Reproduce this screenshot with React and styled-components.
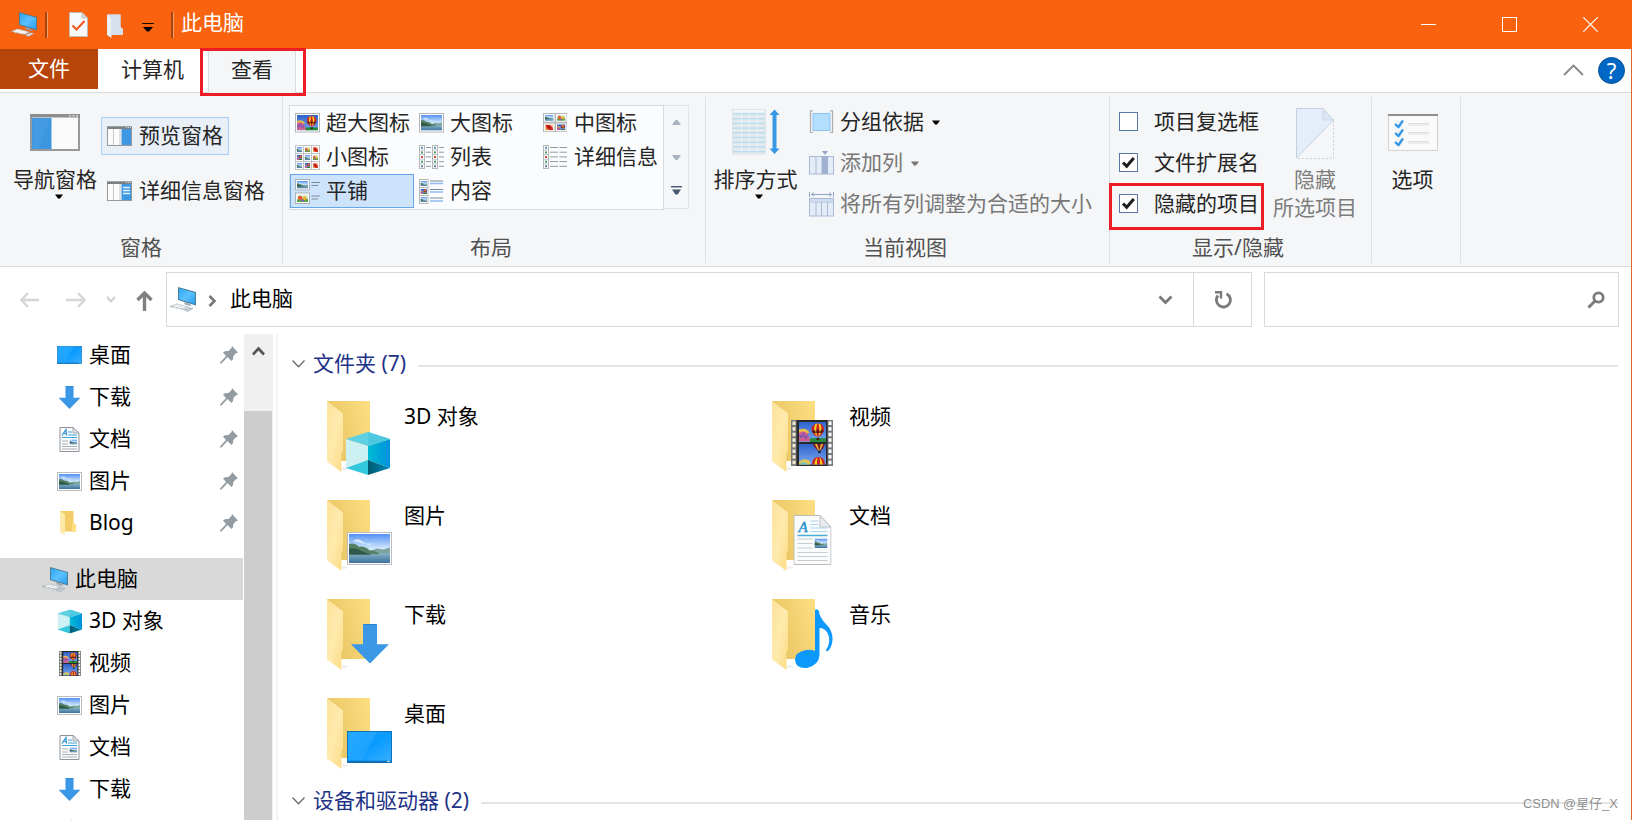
import React from 'react';
import styled, { createGlobalStyle, css } from 'styled-components';

const Global = createGlobalStyle`
  * { box-sizing: border-box; }
  body { margin: 0; background: #fff; overflow: hidden; }
  svg { display: block; flex: none; }
`;

/* ---------- window frame ---------- */

const Window = styled.div`
  width: 1632px;
  height: 820px;
  overflow: hidden;
  position: relative;
  display: flex;
  flex-direction: column;
  background: #fff;
  color: #000;
  font: 21px/28px 'Noto Sans', 'Noto Sans CJK SC', sans-serif;
  white-space: nowrap;
`;

const TitleBar = styled.header`
  height: 49px;
  flex: none;
  display: flex;
  align-items: center;
  background: #f9630f;
  color: #fff;
  padding-left: 11px;
`;

const TitleSeparator = styled.i`
  width: 3px;
  height: 26px;
  margin-left: ${p => p.$gap}px;
  background: #a2470f;
  border-right: 1px solid #fb9a62;
`;

const IconSlot = styled.span`
  margin-left: ${p => p.$gap || 0}px;
  margin-top: ${p => p.$drop || 0}px;
`;

const Title = styled.h1`
  margin: -5px 0 0 7px;
  font: inherit;
`;

const WindowButtons = styled.div`
  margin-left: auto;
  display: flex;
  margin: 0 1px 1px auto;
`;

const WindowButton = styled.span`
  width: 81px;
  height: 48px;
  display: flex;
  align-items: center;
  justify-content: center;
`;

const Body = styled.div`
  flex: 1;
  min-height: 0;
  display: flex;
  flex-direction: column;
  border-right: 1px solid #dd6a2c;
`;

/* ---------- tabs ---------- */

const TabBar = styled.nav`
  height: 44px;
  flex: none;
  display: flex;
  border-bottom: 1px solid #dadbdc;
`;

const Tab = styled.span`
  position: relative;
  height: 43px;
  line-height: 41px;
  text-align: center;
  color: #262626;
  width: ${p => p.$width}px;
  ${p => p.$kind === 'file' && css`
    height: 40px;
    line-height: 39px;
    background: #b74409;
    color: #fff;
  `}
  ${p => p.$kind === 'active' && css`
    height: 44px;
    margin-left: 1px;
    background: #f5f6f7;
    border: solid #dadbdc;
    border-width: 0 1px;
  `}
`;

const Highlight = styled.i`
  position: absolute;
  border: 3px solid #ee1c25;
  z-index: 2;
  pointer-events: none;
  ${p => p.$where};
`;

const TabTools = styled.div`
  margin-left: auto;
  display: flex;
  align-items: center;
  gap: 14px;
  padding: 0 6px 1px 0;
`;

const Help = styled.span`
  width: 27px;
  height: 27px;
  border-radius: 50%;
  background: #0067c4;
  border: 1px solid #064f92;
  color: #fff;
  text-align: center;
  font: 22px/24px 'Noto Sans', sans-serif;
`;

/* ---------- ribbon ---------- */

const Ribbon = styled.section`
  height: 174px;
  flex: none;
  display: flex;
  padding-top: 4px;
  background: #f5f6f7;
  border-bottom: 1px solid #d9dadc;
  color: #262626;
`;

const Group = styled.div`
  position: relative;
  width: ${p => p.$width}px;
  height: 166px;
  border-right: 1px solid #e0e1e3;
  display: flex;
  flex-direction: column;
`;

const GroupBody = styled.div`
  height: 136px;
  display: flex;
  align-items: flex-start;
  padding: ${p => p.$pad};
`;

const GroupLabel = styled.div`
  text-align: center;
  color: #515151;
  padding-right: ${p => p.$shift || 0}px;
`;

const BigButton = styled.div`
  width: ${p => p.$width}px;
  display: flex;
  flex-direction: column;
  align-items: center;
  color: ${p => (p.$disabled ? '#7d7d7d' : '#262626')};
  & > svg:last-child { margin: 1px 0 0 7px; }
`;

const BigIcon = styled.span`
  height: 68px;
  padding-top: ${p => p.$top}px;
`;

const PaneStack = styled.div`
  margin: 20px 0 0 2px;
  display: flex;
  flex-direction: column;
  gap: 17px;
`;

const CommandStack = styled.div`
  margin: 11px 0 0 ${p => p.$left}px;
  display: flex;
  flex-direction: column;
  gap: 13px;
`;

const ItemText = styled.span`
  margin-bottom: 2px;
`;

const PaneButton = styled.div`
  height: 38px;
  width: ${p => p.$width}px;
  padding-left: 5px;
  display: flex;
  align-items: center;
  gap: 7px;
  border: 1px solid ${p => (p.$on ? '#a5cdf5' : 'transparent')};
  background: ${p => (p.$on ? '#e8eff7' : 'transparent')};
`;

const Gallery = styled.div`
  display: flex;
  width: 400px;
  height: 105px;
`;

const GalleryGrid = styled.div`
  width: 375px;
  border: 1px solid #dadbdc;
  background: #fbfcfd;
  display: grid;
  grid-template-columns: repeat(3, 124px);
  grid-auto-rows: 34px;
`;

const GalleryItem = styled.div`
  display: flex;
  align-items: center;
  gap: 6px;
  padding-left: 4px;
  border: 1px solid ${p => (p.$on ? '#66a7e8' : 'transparent')};
  background: ${p => (p.$on ? '#cde3fb' : 'transparent')};
`;

const GalleryScroll = styled.div`
  width: 25px;
  height: 104px;
  display: grid;
  grid-template-rows: 35px 34px 34px;
  border: solid #e3e4e6;
  border-width: 1px 1px 1px 0;
`;

const GalleryArrow = styled.span`
  display: flex;
  align-items: center;
  justify-content: center;
  padding-bottom: 2px;
  ${p => p.$last && 'border-left: 1px solid #dadbdc; margin-left: -1px; padding-bottom: 4px;'}
`;

const Command = styled.div`
  height: 28px;
  display: flex;
  align-items: center;
  color: ${p => (p.$disabled ? '#777' : '#262626')};
  & > ${ItemText} { margin: 0 8px 2px 6px; }
`;

const Check = styled.label`
  position: relative;
  height: 28px;
  display: flex;
  align-items: center;
  gap: 16px;
`;

const Box = styled.span`
  width: 19px;
  height: 19px;
  margin-bottom: 2px;
  background: #fff;
  border: 1px solid #5a76a8;
`;

/* ---------- address row ---------- */

const AddressRow = styled.div`
  height: 67px;
  flex: none;
  display: flex;
  padding: 5px 12px 7px 0;
`;

const History = styled.div`
  width: 166px;
  display: flex;
  align-items: center;
  padding-left: 20px;
`;

const AddressBox = styled.div`
  width: 1086px;
  border: 1px solid #d9d9d9;
  display: flex;
  align-items: center;
`;

const Crumb = styled.span`
  margin: -3px 0 0 14px;
  flex: 1;
`;

const Refresh = styled.span`
  width: 58px;
  height: 100%;
  margin-left: 20px;
  border-left: 1px solid #d9d9d9;
  display: flex;
  align-items: center;
  justify-content: center;
`;

const SearchBox = styled.div`
  margin-left: 12px;
  flex: 1;
  border: 1px solid #d9d9d9;
  display: flex;
  align-items: center;
  justify-content: flex-end;
  padding-right: 13px;
`;

/* ---------- explorer ---------- */

const Explorer = styled.div`
  flex: 1;
  min-height: 0;
  display: flex;
  overflow: hidden;
`;

const Sidebar = styled.aside`
  width: 244px;
  flex: none;
`;

const SideGap = styled.div`
  height: 14px;
`;

const SideItem = styled.div`
  height: 42px;
  width: 243px;
  display: flex;
  align-items: center;
  padding: 0 5px 0 ${p => (p.$root ? 42 : 57)}px;
  background: ${p => (p.$root ? '#d9d9d9' : 'transparent')};
`;

const SideLabel = styled.span`
  flex: 1;
  margin: -2px 0 0 ${p => (p.$root ? 6 : 7)}px;
`;

const ScrollBar = styled.div`
  width: 29px;
  flex: none;
  display: flex;
  flex-direction: column;
  background: #f0f0f0;
`;

const ScrollUp = styled.span`
  height: 77px;
  padding: 12px 0 0 8px;
`;

const Thumb = styled.span`
  flex: 1;
  width: 28px;
  background: #cdcdcd;
`;

const Content = styled.main`
  flex: 1;
  margin-left: 3px;
  border-left: 2px solid #f3f3f3;
  padding: 13px 13px 0 14px;
  overflow: hidden;
`;

const SectionHead = styled.div`
  height: 34px;
  display: flex;
  align-items: center;
  color: #1e3287;
  & > span { margin: -2px 12px 0 8px; }
  &::after {
    content: '';
    flex: 1;
    height: 2px;
    margin-top: 4px;
    background: #e4e4e4;
  }
`;

const Tiles = styled.div`
  display: grid;
  grid-template-columns: 445px 445px;
  grid-auto-rows: 99px;
  padding: 20px 0 0 35px;
  height: 403px;
`;

const Tile = styled.div`
  display: flex;
  gap: 7px;
`;

const TileLabel = styled.span`
  margin-top: 1px;
`;

const Watermark = styled.div`
  position: absolute;
  left: 1523px;
  top: 795px;
  font: 12.9px/18px 'Liberation Sans', 'Noto Sans CJK SC', sans-serif;
  color: #8f8f8f;
`;

/* ---------- drawings ---------- */

const Caret = ({ color = '#000' }) => (
  <svg width="8" height="5" viewBox="0 0 8 5"><path d="M0 0.5H8L5 4.5H3Z" fill={color} /></svg>
);

const Landscape = ({ x = 0, y = 0, w, h }) => (
  <svg x={x} y={y} width={w} height={h} viewBox="0 0 44 32" preserveAspectRatio="none">
    <defs>
      <linearGradient id="sky" x1="0" y1="0" x2="0" y2="1">
        <stop offset="0" stopColor="#5590f5" /><stop offset="0.55" stopColor="#dcf1fd" />
      </linearGradient>
      <linearGradient id="lake" x1="0" y1="0" x2="0" y2="1">
        <stop offset="0" stopColor="#86b4c4" /><stop offset="1" stopColor="#3e719f" />
      </linearGradient>
    </defs>
    <rect width="44" height="32" fill="url(#sky)" />
    <path d="M4 8Q9 3 14 8T28 9L22 12Z" fill="#fff" opacity=".6" />
    <path d="M22 19L30 16L37 17L44 15V22H20Z" fill="#7fa39f" />
    <rect y="21" width="44" height="11" fill="url(#lake)" />
    <path d="M0 11Q6 9 11 14Q17 13 22 18Q28 18 33 22H0Z" fill="#557f62" />
    <path d="M0 16Q8 15 14 19L24 23H0Z" fill="#2f5a4a" />
  </svg>
);

const Balloons = ({ x = 0, y = 0, w, h }) => (
  <svg x={x} y={y} width={w} height={h} viewBox="0 0 28 21" preserveAspectRatio="none">
    <defs>
      <linearGradient id="dusk" x1="0" y1="0" x2="0" y2="1">
        <stop offset="0" stopColor="#2f62cc" /><stop offset="1" stopColor="#79a9ee" />
      </linearGradient>
    </defs>
    <rect width="28" height="21" fill="url(#dusk)" />
    <path d="M11 17H28V21H11Z" fill="#258a39" />
    <path d="M0 9Q6 7 9 12L12 20Q6 21 0 20Z" fill="#cf5f8c" />
    <path d="M0 8Q7 5 11 11L9 12Q5 8.500 0 11Z" fill="#e9bd4a" />
    <path d="M0 13L2.500 16L4.500 12.500L7 17L9 14" fill="none" stroke="#7355c0" strokeWidth="1.500" />
    <path d="M19.500 1.500Q26 2 26 8Q25.500 12 21.500 15H17.500Q13.500 12 13 8Q13 2 19.500 1.500Z" fill="#cf2426" />
    <path d="M17 2Q14 8 18 14.500H18.700Q16.800 8 18.700 1.600ZM20.300 1.600Q22.200 8 20.300 14.500H21Q25 8 22 2Z" fill="#f7d51e" />
    <path d="M13.300 9.500L15.500 8L17.500 10L19.500 8L21.500 10L23.500 8L25.700 9.500L24.500 11.500H14.500Z" fill="#3b1414" opacity=".75" />
    <rect x="18.200" y="16.500" width="2.800" height="2.500" fill="#3c2413" />
  </svg>
);

const Flowers = ({ x = 0, y = 0, w, h }) => (
  <svg x={x} y={y} width={w} height={h} viewBox="0 0 12 9" preserveAspectRatio="none">
    <rect width="12" height="9" fill="#d8ecda" />
    <path d="M0 6L12 5V9H0Z" fill="#5aa345" />
    <circle cx="3.4" cy="4" r="2.5" fill="#e2572b" />
    <circle cx="8.4" cy="4.5" r="2.3" fill="#eeb028" />
    <circle cx="6" cy="7" r="1.4" fill="#8c58c9" />
  </svg>
);

const Rose = ({ x = 0, y = 0, w, h }) => (
  <svg x={x} y={y} width={w} height={h} viewBox="0 0 12 9" preserveAspectRatio="none">
    <rect width="12" height="9" fill="#f3c79e" />
    <path d="M1 1H7L11 5V9H6L2 6Z" fill="#d3251c" />
    <path d="M4 3L6 3L7 6L5 5Z" fill="#7a1010" />
    <path d="M0 7H4V9H0Z" fill="#e3a02a" />
  </svg>
);

const arts = [Landscape, Flowers, Rose, Balloons];

const Art = ({ i, ...rest }) => {
  const A = arts[i];
  return <A {...rest} />;
};

const Computer = ({ keys = '#c9d2d8' }) => (
  <svg width="27" height="25" viewBox="0 0 27 25">
    <defs>
      <linearGradient id="screen" x1="0" y1="0" x2="1" y2="1">
        <stop offset="0" stopColor="#2fa5f5" /><stop offset=".5" stopColor="#5cc1ff" /><stop offset="1" stopColor="#2b9df0" />
      </linearGradient>
    </defs>
    <path d="M8 0L26 5V18.500L8 13Z" fill="#4d7d99" />
    <path d="M9 1.200L25 5.700V17L9 12.200Z" fill="url(#screen)" />
    <path d="M14 15L20 17L21.500 19L15 17.500Z" fill="#8fa3ae" />
    <path d="M0 19.500L6.500 17L18.500 20L13 22.500Z" fill={keys} stroke="#8f9ba3" strokeWidth=".5" />
    <path d="M3 18.500L15 21.400M5 17.500L17 20.500M4 20.500L10 17.800M8 21.400L14 18.900" stroke="#fff" strokeWidth=".7" />
    <path d="M14 22.800L20 20.800L23 21.500L17.500 24.500Z" fill={keys} stroke="#8f9ba3" strokeWidth=".5" />
  </svg>
);

const DocCheck = () => (
  <svg width="19" height="25" viewBox="0 0 19 25">
    <path d="M0.500 0.500H13L18.500 6V24.500H0.500Z" fill="#f8f9fa" stroke="#c6b9b0" />
    <path d="M13 0.500V6H18.500Z" fill="#d4d9de" stroke="#b9a89c" strokeWidth=".6" />
    <path d="M3.500 13.500L7.500 17.500L15.500 9" fill="none" stroke="#ef5a1c" strokeWidth="2" />
  </svg>
);

const PaleFolder = () => (
  <svg width="16" height="24" viewBox="0 0 16 24">
    <path d="M0 0.500H13.500V13L16 15V21H0Z" fill="#cbd7e5" />
    <path d="M0 0.500L4.500 4V24L0 21Z" fill="#eaf0f7" />
    <path d="M4.500 21V4L1 .5H13.500V13L16 15V21Z" fill="#d6e0ec" />
  </svg>
);

const SideFolder = () => (
  <svg width="25" height="24" viewBox="0 0 25 24">
    <path d="M3 0H16.500V12L19 13.500V20.500H3Z" fill="#f2cd68" />
    <path d="M3 0L8 3.500V18L7.500 24L3 21Z" fill="#ffe9a8" />
    <path d="M15 12L19 13.500V20.500H15Z" fill="#ffdf7f" />
  </svg>
);

const PaneIcon = ({ lines }) => (
  <svg width="25" height="20" viewBox="0 0 25 20">
    <rect x=".5" y="1" width="24" height="18.500" fill="#fcfcfc" stroke="#96989a" />
    <path d="M0 .5H25V3H0Z" fill="#7d7f81" />
    <path d="M19 1.500H20M21 1.500H22M23 1.500H24" stroke="#ddd" />
    <path d="M6.500 3V19M13 3V19" stroke="#c4c6c8" />
    <path d="M14.500 3H24V19H14.500Z" fill="#3d97e3" />
    {lines && <path d="M16 6.500H23M16 9.500H23M16 12.500H23" stroke="#e2f1ff" strokeWidth="1.300" />}
  </svg>
);

const NavPaneIcon = () => (
  <svg width="50" height="37" viewBox="0 0 50 37">
    <rect x="1" y="1" width="48" height="35" fill="#fafafa" stroke="#97999b" strokeWidth="2" />
    <path d="M0 0H50V3.500H0Z" fill="#8b8d8f" />
    <path d="M39 1.800H41M42.500 1.800H44.500M46 1.800H48" stroke="#d7d7d7" strokeWidth="1.500" />
    <path d="M2 4H21.500V35H2Z" fill="#3d97e0" />
    <path d="M3 5L20 4L9 34H3Z" fill="#56a6e8" opacity=".3" />
  </svg>
);

const Framed = ({ children }) => (
  <svg width="25" height="20" viewBox="0 0 25 20">
    <rect x=".5" y=".5" width="24" height="18.500" fill="#fff" stroke="#b3b5b7" />
    {children}
  </svg>
);

const XLIcon = () => <Framed><Balloons x="2" y="2" w="21" h="15.500" /></Framed>;
const LIcon = () => <Framed><Landscape x="2" y="2" w="21" h="15.500" /></Framed>;

const MIcon = () => (
  <svg width="25" height="20" viewBox="0 0 25 20">
    <rect width="24" height="19" fill="#b5b7b9" />
    {[0, 1, 2, 3].map(k => {
      const x = (k % 2) * 12 + 1, y = (k >> 1) * 9.5 + 1;
      return <g key={k}><rect x={x} y={y} width="10.500" height="7.700" fill="#fff" /><Art i={k} x={x + 1} y={y + 0.8} w="8.500" h="6" /></g>;
    })}
  </svg>
);

const SIcon = () => (
  <svg width="25" height="25" viewBox="0 0 25 25">
    <rect width="25" height="25" fill="#c2c4c6" />
    {[0, 1, 2, 3, 0, 1, 0, 3, 2].map((a, k) => {
      const x = (k % 3) * 8 + 1, y = Math.floor(k / 3) * 8 + 1;
      return <g key={k}><rect x={x} y={y} width="7" height="7" fill="#fff" /><Art i={a} x={x + 0.7} y={y + 1} w="5.600" h="5" /></g>;
    })}
  </svg>
);

const dots = ['#5a8fc0', '#4f9a6a', '#d94a3a', '#3f9a70', '#6a7fa0'];

const DotColumn = ({ x, w }) => (
  <g>
    <rect x={x} y="0.500" width="5" height="23" fill="#fff" stroke="#b5b7b9" />
    {dots.map((c, k) => (
      <g key={k}>
        <path d={`M${x} ${5 + k * 4.6}h5`} stroke="#b5b7b9" strokeWidth=".8" />
        <rect x={x + 1.5} y={1.8 + k * 4.6} width="2" height="2" fill={c} />
        <path d={`M${x + 6.5} ${2.5 + k * 4.7}h${w}`} stroke="#96989a" />
      </g>
    ))}
  </g>
);

const ListIcon = () => (
  <svg width="25" height="24" viewBox="0 0 25 24"><DotColumn x={0.5} w={5} /><DotColumn x={13.5} w={5} /></svg>
);

const DetailsIcon = () => (
  <svg width="25" height="24" viewBox="0 0 25 24">
    <DotColumn x={0.5} w={8} />
    {[0, 1, 2, 3, 4].map(k => <path key={k} d={`M16.500 ${2.5 + k * 4.7}h7.500`} stroke="#96989a" />)}
  </svg>
);

const TilesIcon = () => (
  <svg width="25" height="25" viewBox="0 0 25 25">
    <rect x=".5" y=".5" width="14" height="10.500" fill="#fff" stroke="#a9b1b8" />
    <Landscape x="2" y="2" w="11" h="7.500" />
    <rect x=".5" y="14" width="14" height="10.500" fill="#fff" stroke="#a9b1b8" />
    <Flowers x="2" y="15.500" w="11" h="7.500" />
    <path d="M16.500 3.500H25M16.500 6.500H23M16.500 17H25M16.500 20H23" stroke="#7f8b96" />
  </svg>
);

const ContentIcon = () => (
  <svg width="25" height="25" viewBox="0 0 25 25">
    <rect x=".5" y=".5" width="8.500" height="24" fill="#fff" stroke="#b5b7b9" />
    <path d="M0 8.500H9M0 16.500H9" stroke="#b5b7b9" />
    <Landscape x="1.500" y="2" w="6.500" h="5" />
    <Balloons x="1.500" y="10" w="6.500" h="5" />
    <Landscape x="1.500" y="18" w="6.500" h="5" />
    <path d="M11 2H24M11 10.500H24M11 19H24" stroke="#76889c" />
    <path d="M11 4.500H24M11 13H24M11 22H24" stroke="#8fbcf2" strokeWidth="1.600" />
  </svg>
);

const SortIcon = () => (
  <svg width="48" height="46" viewBox="0 0 48 46">
    <rect x=".5" y=".5" width="33" height="44.500" fill="#e4eaee" stroke="#dde4e9" />
    <path d="M1 1H33V3.500H1Z" fill="#f2f4f5" />
    {Array.from({ length: 9 }, (_, k) => <path key={k} d={`M1 ${5 + k * 4.7}h32`} stroke="#b4dcee" strokeWidth="1.400" />)}
    {[9.5, 17, 25].map(x => <path key={x} d={`M${x} 3v42`} stroke="#eef3f6" strokeWidth=".8" />)}
    <path d="M42.500 0.500L47.500 6H44.500V39.500H47.500L42.500 45L37.500 39.500H40.500V6H37.500Z" fill="#3a97e4" />
  </svg>
);

const GroupIcon = () => (
  <svg width="25" height="24" viewBox="0 0 25 24">
    <path d="M4 .8H1.500V22.500H4M21 .8H23.500V22.500H21" fill="none" stroke="#a9abad" strokeWidth="1.200" />
    <rect x="4" y="3.500" width="17" height="17" fill="#b3defd" stroke="#8fc3ef" />
  </svg>
);

const AddColumnIcon = () => (
  <svg width="25" height="24" viewBox="0 0 25 24">
    <path d="M13 0H19L16 4Z" fill="#95a7c6" />
    <rect x=".5" y="5.500" width="24" height="17.500" fill="#e4ecf8" stroke="#a8b9d6" />
    <path d="M7 5V23M13 5V23" stroke="#a8b9d6" />
    <path d="M13 5H19V23H13Z" fill="#a0b1cf" />
  </svg>
);

const FitIcon = () => (
  <svg width="25" height="25" viewBox="0 0 25 25">
    <path d="M.5 0V5M24.500 0V5M2 2.500H23M5 .5L2.500 2.500L5 4.500M20 .5L22.500 2.500L20 4.500" fill="none" stroke="#92a5c6" />
    <rect x=".5" y="6.500" width="24" height="17.500" fill="#e4ecf8" stroke="#a8b9d6" />
    <path d="M0 10H25M7 10V24M12.500 10V24M18.500 10V24" stroke="#a8b9d6" />
    <path d="M1 7H24V9.500H1Z" fill="#cfdbee" />
  </svg>
);

const CheckMark = () => (
  <svg width="17" height="17" viewBox="0 0 17 17"><path d="M3 8.500L6.700 12.300L13.800 4" fill="none" stroke="#1c1c1c" strokeWidth="3" /></svg>
);

const HideIcon = () => (
  <svg width="38" height="51" viewBox="0 0 38 51">
    <path d="M.5 .5H27L37.500 12L.5 50Z" fill="#e5edfa" stroke="#c2d0e2" />
    <path d="M27 .5V12H37.500Z" fill="#dce6f4" stroke="#c2d0e2" strokeWidth=".7" />
    <path d="M37.500 12V50.500H0" fill="none" stroke="#cdd5e0" strokeDasharray="2.500 1.500" />
  </svg>
);

const OptionsIcon = () => (
  <svg width="50" height="37" viewBox="0 0 50 37">
    <rect x=".5" y=".5" width="49" height="36" fill="#fafafa" stroke="#d2d3d4" />
    <path d="M0 0H50V2H0Z" fill="#8c8e90" />
    {[10, 19, 28].map(y => (
      <g key={y}>
        <rect x="7" y={y - 3} width="7" height="7" fill="#eef0f2" />
        <path d={`M7 ${y}L10.500 ${y + 3}L15 ${y - 3.5}`} fill="none" stroke="#3096e6" strokeWidth="2.200" />
        <path d={`M20 ${y - 0.5}h21M20 ${y + 1}h21`} stroke="#dedfe0" />
      </g>
    ))}
  </svg>
);

/* glyphs shared by sidebar (25px) and tiles */

const DesktopArt = ({ x = 0, y = 0, w, h }) => (
  <svg x={x} y={y} width={w} height={h} viewBox="0 0 45 32" preserveAspectRatio="none">
    <defs>
      <linearGradient id="desk" x1="0" y1="0" x2="1" y2="1">
        <stop offset="0" stopColor="#18a4ff" /><stop offset=".5" stopColor="#0a9bff" /><stop offset="1" stopColor="#3bb0ff" />
      </linearGradient>
    </defs>
    <rect x=".5" y=".5" width="44" height="31" fill="url(#desk)" stroke="#1272b8" />
    <path d="M1 1H30L14 30H1Z" fill="#36b0ff" opacity=".45" />
    <path d="M1 30.500H44" stroke="#0a6cb5" strokeWidth="1.500" />
    <path d="M40 30.500H43" stroke="#bfe4ff" />
  </svg>
);

const CubeArt = ({ x = 0, y = 0, w, h }) => (
  <svg x={x} y={y} width={w} height={h} viewBox="0 0 44 43" preserveAspectRatio="none">
    <defs>
      <linearGradient id="cubeRight" x1="0" y1="0" x2="1" y2="0">
        <stop offset="0" stopColor="#00bcd4" /><stop offset="1" stopColor="#0090dc" />
      </linearGradient>
      <linearGradient id="cubeBase" x1="0" y1="0" x2="1" y2="0">
        <stop offset="0" stopColor="#005a72" /><stop offset="1" stopColor="#0088b8" />
      </linearGradient>
    </defs>
    <path d="M0 7L22 14V28L0 36Z" fill="#cdf0f2" />
    <path d="M44 7L22 14V28L44 36Z" fill="url(#cubeRight)" />
    <path d="M0 7L22 0L44 7L22 14Z" fill="#5fd0e2" />
    <path d="M22 0L44 7L22 14Z" fill="#4dc8df" />
    <path d="M0 36L22 28V43Z" fill="#33c8dc" />
    <path d="M44 36L22 28V43Z" fill="url(#cubeBase)" />
  </svg>
);

const DownArt = ({ x = 0, y = 0, w, h }) => (
  <svg x={x} y={y} width={w} height={h} viewBox="0 0 38 39" preserveAspectRatio="none">
    <path d="M12 0H26V20H38L19 39L0 20H12Z" fill="#3a98e6" />
    <path d="M12.500 .5H25.500" stroke="#2a83cc" />
  </svg>
);

const FilmArt = ({ x = 0, y = 0, w, h }) => (
  <svg x={x} y={y} width={w} height={h} viewBox="0 0 42 46" preserveAspectRatio="none">
    <rect width="42" height="46" fill="#77797b" />
    <rect x="5.500" width="31" height="46" fill="#262829" />
    {[0, 1, 2, 3, 4, 5, 6, 7].map(k => (
      <g key={k} fill="#f2ead2">
        <rect x="1.500" y={1.5 + k * 5.6} width="3" height="3.500" />
        <rect x="37.500" y={1.5 + k * 5.6} width="3" height="3.500" fill="#fff" />
      </g>
    ))}
    <Balloons x="8" y="2" w="27" h="20" />
    <rect x="8" y="24" width="27" height="20.500" fill="url(#dusk)" />
    <path d="M22 24H34Q33 28 30 30.500H27Q23 28 22 24Z" fill="#7d2030" />
    <path d="M24 24H26L28 30H27ZM30 24H32L29.500 30H28.500Z" fill="#f0c428" />
    <rect x="27.200" y="31" width="2.500" height="2" fill="#222" />
    <path d="M8 42Q13 37 19 41V44.500H8Z" fill="#e3c651" />
    <path d="M8 44.500Q13 40 17 44.500Z" fill="#6fc3c8" />
    <path d="M21 44.500Q21 37 27.500 37T34 44.500Z" fill="#cf2426" />
    <path d="M23.500 44.500Q24 39 26.500 37.500Q25.500 41 26 44.500ZM31.500 44.500Q31 39 28.500 37.500Q29.500 41 29 44.500Z" fill="#f7d51e" />
  </svg>
);

const LetterA = styled.text`
  font: italic 15px 'Liberation Serif', serif;
  fill: #1d8fcb;
  stroke: #1d8fcb;
  stroke-width: 0.4px;
`;

const DocArt = ({ x = 0, y = 0, w, h }) => (
  <svg x={x} y={y} width={w} height={h} viewBox="0 0 38 50" preserveAspectRatio="none">
    <path d="M.5 .5H26.500L37.500 12V49.500H.5Z" fill="#fafbfc" stroke="#b9bdc0" />
    <path d="M26.500 .5V12H37.500Z" fill="#e9ecef" stroke="#b4b8bb" strokeWidth=".8" />
    <LetterA x="5" y="17">A</LetterA>
    <path d="M17 6H25M17 9.500H25M17 13H34M17 16.500H34" stroke="#a9d6ec" />
    <path d="M4 20.500H34" stroke="#4aaed8" strokeWidth="1.300" />
    <path d="M4 24H19M4 28.500H19M4 33H19M4 37.500H34M4 41.500H34M4 45.500H34" stroke="#c9ccce" />
    <Landscape x="21" y="23.500" w="13" h="9.500" />
  </svg>
);

const PictureArt = ({ x = 0, y = 0, w, h }) => (
  <svg x={x} y={y} width={w} height={h}>
    <rect width={w} height={h} fill="#b9bdc2" />
    <rect x="1" y="1" width={w - 2} height={h - 2} fill="#fff" />
    <Landscape x="2" y="2" w={w - 4} h={h - 4} />
  </svg>
);

const MusicArt = ({ x = 0, y = 0, w, h }) => (
  <svg x={x} y={y} width={w} height={h} viewBox="0 0 40 61" preserveAspectRatio="none">
    <path d="M21 2Q23 0 25 3Q25 9 32 16Q39 23 38.500 32Q38 39 34 43Q32 44 32 42Q38 33 33 24Q30 20 25.500 20V47Q25 57 13 60Q2 61 1 52Q1 44 12 42Q17 41 21 43Z" fill="#0d98fb" />
  </svg>
);

const SideIcon = ({ kind }) => (
  <svg width="25" height="25" viewBox="0 0 25 25">
    {kind === 'desktop' && <DesktopArt x="0" y="3" w="25" h="18" />}
    {kind === 'down' && <DownArt x="1.500" y="1" w="22" h="23" />}
    {kind === 'doc' && (
      <g>
        <path d="M3 .5H16L22 6V24.500H3Z" fill="#fbfcfd" stroke="#8e9499" />
        <path d="M16 .5V6H22Z" fill="#dfe3e7" stroke="#8e9499" strokeWidth=".7" />
        <path d="M5 8.500L9 2.500L9.500 8.500M6.500 6.500H9.500" fill="none" stroke="#2a93cf" strokeWidth="1.200" />
        <path d="M11 5H15M11 8H20M5 10.500H20" stroke="#3aa6dc" strokeWidth="1.200" />
        <path d="M5 14H11M5 17H11M5 19.500H20M5 22H20" stroke="#a9adb0" />
        <Landscape x="12.500" y="12.500" w="7.500" h="5" />
      </g>
    )}
    {kind === 'picture' && <PictureArt x="0" y="3" w={25} h={19} />}
    {kind === 'cube' && <CubeArt x=".5" y=".5" w="24.500" h="24" />}
    {kind === 'film' && <FilmArt x="2" y="0" w="22" h="25" />}
    {kind === 'music' && <MusicArt x="5" y="0" w="16" h="25" />}
  </svg>
);

const Pin = () => (
  <svg width="18" height="18" viewBox="0 0 18 18">
    <path d="M12 0L18 6.500L16 7.200L13.500 9.800L12.800 13.500L11.500 15L7.500 11L1.500 17.500L0 17.500V16.500L6 10L3 6.500L5 5.300L8.500 5L11.500 2Z" fill="#929ca2" />
  </svg>
);

const Overlay = ({ kind }) => {
  switch (kind) {
    case 'cube': return <CubeArt x="19" y="31" w="44" h="43" />;
    case 'film': return <FilmArt x="19" y="19" w="42" h="46" />;
    case 'picture': return <PictureArt x="20" y="32" w={45} h={33} />;
    case 'doc': return <DocArt x="21.500" y="15" w="38" h="50" />;
    case 'down': return <DownArt x="24" y="25" w="38" h="39.500" />;
    case 'music': return <MusicArt x="22" y="9" w="40" h="61" />;
    default: return <DesktopArt x="20" y="33" w="45" h="32" />;
  }
};

const FolderIcon = ({ kind }) => (
  <svg width="70" height="76" viewBox="0 0 70 76">
    <defs>
      <linearGradient id="back" x1="0" y1="0.400" x2="1" y2="0">
        <stop offset="0" stopColor="#e9c563" /><stop offset="1" stopColor="#fddf82" />
      </linearGradient>
      <linearGradient id="front" x1="0" y1="0" x2="1" y2="1">
        <stop offset="0" stopColor="#fce39a" /><stop offset=".5" stopColor="#ffeaae" /><stop offset="1" stopColor="#fbdb83" />
      </linearGradient>
    </defs>
    <path d="M15 66L22 67L16 69.500Z" fill="#ececec" />
    <path d="M0 0H43V60H0Z" fill="url(#back)" />
    <path d="M0 0L16 12.500V50L14.500 53V71L0 60.500Z" fill="url(#front)" />
    <Overlay kind={kind} />
  </svg>
);

const Chevron = ({ w, h, d, color, width }) => (
  <svg width={w} height={h} viewBox={`0 0 ${w} ${h}`}><path d={d} fill="none" stroke={color} strokeWidth={width} /></svg>
);

const SectionChevron = () => <Chevron w={13} h={8} d="M.5 .5L6.500 6.800L12.500 .5" color="#6a6a6a" width={1.3} />;

/* ---------- data ---------- */

const layouts = [
  ['超大图标', XLIcon], ['大图标', LIcon], ['中图标', MIcon],
  ['小图标', SIcon], ['列表', ListIcon], ['详细信息', DetailsIcon],
  ['平铺', TilesIcon], ['内容', ContentIcon],
];

const quick = [['桌面', 'desktop'], ['下载', 'down'], ['文档', 'doc'], ['图片', 'picture'], ['Blog', 'folder']];
const places = [['3D 对象', 'cube'], ['视频', 'film'], ['图片', 'picture'], ['文档', 'doc'], ['下载', 'down']];
const folders = [
  ['3D 对象', 'cube'], ['视频', 'film'], ['图片', 'picture'], ['文档', 'doc'],
  ['下载', 'down'], ['音乐', 'music'], ['桌面', 'desktop'],
];

/* ---------- app ---------- */

export default function App() {
  return (
    <Window>
      <Global />
      <TitleBar>
        <Computer keys="#e3e0dd" />
        <TitleSeparator $gap={7} />
        <IconSlot $gap={21}><DocCheck /></IconSlot>
        <IconSlot $gap={19} $drop={2}><PaleFolder /></IconSlot>
        <IconSlot $gap={19} $drop={5}>
          <svg width="12" height="9" viewBox="0 0 12 9"><path d="M0 .5H12" stroke="#1a0a00" /><path d="M1 4H11L7 8.500H5Z" fill="#000" /></svg>
        </IconSlot>
        <TitleSeparator $gap={17} />
        <Title>此电脑</Title>
        <WindowButtons>
          <WindowButton><svg width="15" height="15"><path d="M0 7.500H15" stroke="#fff" /></svg></WindowButton>
          <WindowButton><svg width="15" height="15"><rect x=".5" y=".5" width="14" height="14" fill="none" stroke="#fff" /></svg></WindowButton>
          <WindowButton><svg width="15" height="15"><path d="M.3 .3L14.700 14.700M14.700 .3L.3 14.700" stroke="#fff" strokeWidth="1.200" /></svg></WindowButton>
        </WindowButtons>
      </TitleBar>
      <Body>
        <TabBar>
          <Tab $kind="file" $width={98}>文件</Tab>
          <Tab $width={109}>计算机</Tab>
          <Tab $kind="active" $width={88}>
            查看
            <Highlight $where="left: -9px; top: -1px; width: 106px; height: 48px" />
          </Tab>
          <TabTools>
            <Chevron w={21} h={12} d="M1 11L10.500 1.500L20 11" color="#868686" width={1.8} />
            <Help>?</Help>
          </TabTools>
        </TabBar>
        <Ribbon>
          <Group $width={283}>
            <GroupBody $pad="0 0 0 11px">
              <BigButton $width={88}>
                <BigIcon $top={17}><NavPaneIcon /></BigIcon>
                导航窗格
                <Caret />
              </BigButton>
              <PaneStack>
                <PaneButton $on $width={128}><PaneIcon /><ItemText>预览窗格</ItemText></PaneButton>
                <PaneButton $width={170}><PaneIcon lines /><ItemText>详细信息窗格</ItemText></PaneButton>
              </PaneStack>
            </GroupBody>
            <GroupLabel>窗格</GroupLabel>
          </Group>
          <Group $width={423}>
            <GroupBody $pad="8px 0 0 6px">
              <Gallery>
                <GalleryGrid>
                  {layouts.map(([name, Icon]) => (
                    <GalleryItem key={name} $on={name === '平铺'}><Icon /><ItemText>{name}</ItemText></GalleryItem>
                  ))}
                </GalleryGrid>
                <GalleryScroll>
                  <GalleryArrow><svg width="9" height="5"><path d="M3.500 0H5.500L9 5H0Z" fill="#a9b3be" /></svg></GalleryArrow>
                  <GalleryArrow><svg width="9" height="5"><path d="M0 0H9L5.500 5H3.500Z" fill="#a9b3be" /></svg></GalleryArrow>
                  <GalleryArrow $last><svg width="11" height="9"><path d="M0 .7H11" stroke="#44596f" strokeWidth="1.400" /><path d="M1 3.500H10L6.500 8.500H4.500Z" fill="#44596f" /></svg></GalleryArrow>
                </GalleryScroll>
              </Gallery>
            </GroupBody>
            <GroupLabel $shift={6}>布局</GroupLabel>
          </Group>
          <Group $width={404}>
            <GroupBody $pad="0 0 0 6px">
              <BigButton $width={87}>
                <BigIcon $top={12}><SortIcon /></BigIcon>
                排序方式
                <Caret />
              </BigButton>
              <CommandStack $left={10}>
                <Command><GroupIcon /><ItemText>分组依据</ItemText><Caret /></Command>
                <Command $disabled><AddColumnIcon /><ItemText>添加列</ItemText><Caret color="#777" /></Command>
                <Command $disabled><FitIcon /><ItemText>将所有列调整为合适的大小</ItemText></Command>
              </CommandStack>
            </GroupBody>
            <GroupLabel $shift={5}>当前视图</GroupLabel>
          </Group>
          <Group $width={262}>
            <GroupBody $pad="0 0 0 9px">
              <CommandStack $left={0}>
                <Check><Box /><ItemText>项目复选框</ItemText></Check>
                <Check><Box><CheckMark /></Box><ItemText>文件扩展名</ItemText></Check>
                <Check>
                  <Box><CheckMark /></Box><ItemText>隐藏的项目</ItemText>
                  <Highlight $where="left: -10px; top: -7px; width: 155px; height: 47px" />
                </Check>
              </CommandStack>
              <BigButton $width={119} $disabled>
                <BigIcon $top={11}><HideIcon /></BigIcon>
                <span>隐藏</span>
                <span>所选项目</span>
              </BigButton>
            </GroupBody>
            <GroupLabel $shift={5}>显示/隐藏</GroupLabel>
          </Group>
          <Group $width={89}>
            <GroupBody $pad="0">
              <BigButton $width={81}>
                <BigIcon $top={17}><OptionsIcon /></BigIcon>
                选项
              </BigButton>
            </GroupBody>
          </Group>
        </Ribbon>
        <AddressRow>
          <History>
            <Chevron w={20} h={16} d="M8 1L1.500 8L8 15M1.500 8H19" color="#d6d6d6" width={2.4} />
            <IconSlot $gap={26}><Chevron w={20} h={16} d="M12 1L18.500 8L12 15M0 8H18.500" color="#d6d6d6" width={2.4} /></IconSlot>
            <IconSlot $gap={20}><Chevron w={10} h={7} d="M1 1L5 5.500L9 1" color="#d0d0d0" width={2} /></IconSlot>
            <IconSlot $gap={20} $drop={2}><Chevron w={17} h={20} d="M1.500 9L8.500 2L15.500 9M8.500 2V20" color="#808080" width={3.4} /></IconSlot>
          </History>
          <AddressBox>
            <IconSlot $gap={3}><Computer /></IconSlot>
            <IconSlot $gap={11} $drop={2}><Chevron w={8} h={12} d="M1.500 1L6.500 6L1.500 11" color="#757575" width={2.6} /></IconSlot>
            <Crumb>此电脑</Crumb>
            <Chevron w={15} h={10} d="M1.500 1.500L7.500 7.500L13.500 1.500" color="#777" width={2.8} />
            <Refresh>
              <svg width="18" height="18" viewBox="0 0 18 18">
                <path d="M12.500 2.700A7 7 0 1 1 4 4.500" fill="none" stroke="#7a7a7a" strokeWidth="2.800" />
                <path d="M1 1.200H7V7.500" fill="none" stroke="#7a7a7a" strokeWidth="2.400" />
              </svg>
            </Refresh>
          </AddressBox>
          <SearchBox>
            <svg width="18" height="18" viewBox="0 0 18 18">
              <circle cx="11.500" cy="6.500" r="4.700" fill="none" stroke="#7a7a7a" strokeWidth="2.800" />
              <path d="M8 10L1.500 16.500" stroke="#7a7a7a" strokeWidth="3" />
            </svg>
          </SearchBox>
        </AddressRow>
        <Explorer>
          <Sidebar>
            {quick.map(([name, kind]) => (
              <SideItem key={name}>
                {kind === 'folder' ? <SideFolder /> : <SideIcon kind={kind} />}
                <SideLabel>{name}</SideLabel>
                <Pin />
              </SideItem>
            ))}
            <SideGap />
            <SideItem $root><Computer /><SideLabel $root>此电脑</SideLabel></SideItem>
            {places.map(([name, kind]) => (
              <SideItem key={name}><SideIcon kind={kind} /><SideLabel>{name}</SideLabel></SideItem>
            ))}
            <SideItem><SideIcon kind="music" /></SideItem>
          </Sidebar>
          <ScrollBar>
            <ScrollUp><Chevron w={13} h={10} d="M1 8.500L6.500 2.500L12 8.500" color="#555" width={2.6} /></ScrollUp>
            <Thumb />
          </ScrollBar>
          <Content>
            <SectionHead><SectionChevron /><span>文件夹 (7)</span></SectionHead>
            <Tiles>
              {folders.map(([name, kind]) => (
                <Tile key={name}><FolderIcon kind={kind} /><TileLabel>{name}</TileLabel></Tile>
              ))}
            </Tiles>
            <SectionHead><SectionChevron /><span>设备和驱动器 (2)</span></SectionHead>
          </Content>
        </Explorer>
      </Body>
      <Watermark>CSDN @星仔_X</Watermark>
    </Window>
  );
}
